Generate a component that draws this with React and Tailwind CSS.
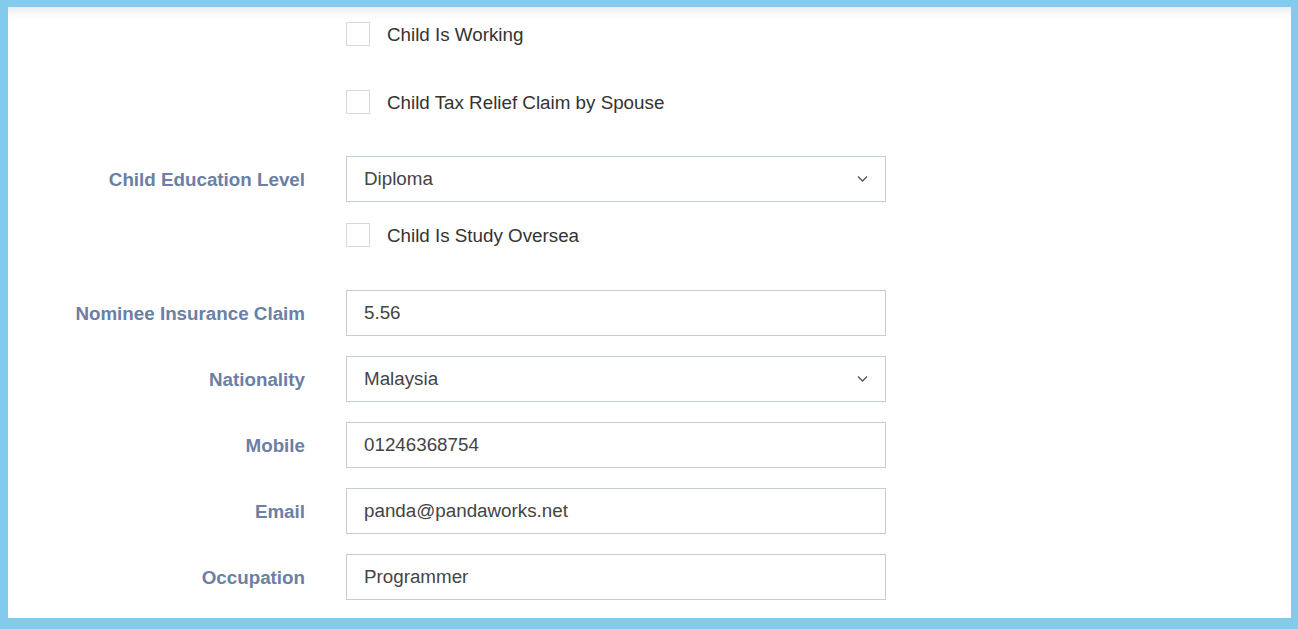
import React from 'react';

const font = { fontFamily: '"Liberation Sans", Arial, sans-serif' };

const Label = ({ children }) => (
    <div className="w-[297px] shrink-0 text-right font-bold text-[18.8px] text-[#6a80a4] translate-y-[1px]">{children}</div>
);

const Chevron = () => (
    <svg width="11" height="7" viewBox="0 0 11 7" className="absolute right-[17px] top-1/2 -translate-y-1/2">
        <polyline points="1,1 5.5,5.5 10,1" fill="none" stroke="#555" strokeWidth="1.3" />
    </svg>
);

const Field = ({ label, value, select, className }) => (
    <div className={`flex items-center ${className || ''}`}>
        <Label>{label}</Label>
        <div className="ml-[41px] relative w-[540px] h-[46px] border border-[#c3cbd8] bg-white flex items-center pl-[17px] text-[18.8px] text-[#444]">
            <span className="translate-y-[-0.5px]">{value}</span>
            {select && <Chevron />}
        </div>
    </div>
);

const Check = ({ label, className }) => (
    <div className={`flex items-center h-[24px] ${className || ''}`}>
        <div className="w-[297px] shrink-0" />
        <div className="ml-[41px] w-[24px] h-[24px] border border-[#d8d8d8] bg-white" />
        <span className="ml-[17px] text-[18.8px] text-[#333] translate-y-[1px]">{label}</span>
    </div>
);

export default function App() {
    return (
        <div className="h-[629px] w-full bg-[#83cbec] pt-[7px] pl-[8px] pr-[7px] pb-[11px]" style={font}>
            <div className="h-full bg-white overflow-hidden shadow-[inset_0_12px_12px_-10px_rgba(0,0,0,0.12)]">
                <Check label="Child Is Working" className="mt-[15px]" />
                <Check label="Child Tax Relief Claim by Spouse" className="mt-[44px]" />
                <Field label="Child Education Level" value="Diploma" select className="mt-[42px]" />
                <Check label="Child Is Study Oversea" className="mt-[21px]" />
                <Field label="Nominee Insurance Claim" value="5.56" className="mt-[43px]" />
                <Field label="Nationality" value="Malaysia" select className="mt-[20px]" />
                <Field label="Mobile" value="01246368754" className="mt-[20px]" />
                <Field label="Email" value="panda@pandaworks.net" className="mt-[20px]" />
                <Field label="Occupation" value="Programmer" className="mt-[20px]" />
            </div>
        </div>
    );
}
